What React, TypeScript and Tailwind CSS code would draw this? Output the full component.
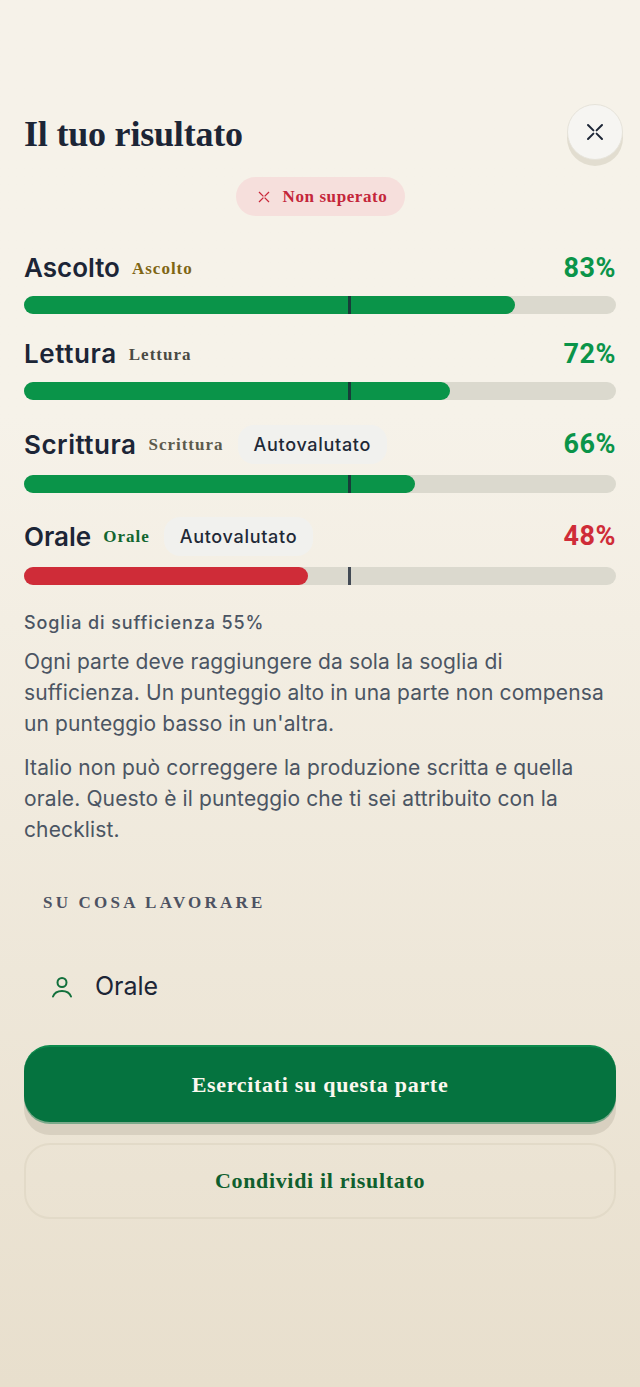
import React from "react";

const sans = "font-['Inter','Noto_Sans',sans-serif]";
const serif = "font-['Liberation_Serif',serif]";

function Row({ name, small, smallColor, pct, danger, val, badge, rowClass, nameTrack }: { name: string; small: string; smallColor: string; pct: string; danger?: boolean; val: number; badge?: boolean; rowClass: string; nameTrack: string }) {
  return (
    <div className={rowClass}>
      <div className={`flex items-center ${badge ? "h-[44px]" : "h-[40px]"}`}>
        <span className={`${sans} text-[26px] font-semibold text-[#1c2536] leading-none ${nameTrack}`}>{name}</span>
        <span className={`${serif} ml-[12px] text-[17px] font-bold tracking-[1px] leading-none ${smallColor}`}>{small}</span>
        {badge && (
          <span className={`${sans} ml-[14px] h-[39px] px-[16px] flex items-center rounded-[16px] bg-[#f1f1ee] text-[18px] font-medium tracking-[0.7px] text-[#1f2937]`}>Autovalutato</span>
        )}
        <span className={`font-['Roboto',sans-serif] ml-auto text-[27px] font-bold tracking-[0.5px] leading-none ${danger ? "text-[#cf2c38]" : "text-[#0a9449]"}`}>{pct}</span>
      </div>
      <div className="relative h-[18px] rounded-full bg-[#dbd9ce] mt-[8px]">
        <div className={`h-full rounded-full ${danger ? "bg-[#cf2c38]" : "bg-[#0a9449]"}`} style={{ width: `${val}%` }} />
        <div className="absolute left-[324px] top-0 h-full w-[3px] bg-[#1c2536]/80" />
      </div>
    </div>
  );
}

export default function App() {
  return (
    <div className={`${sans} w-[640px] h-[1387px] overflow-hidden bg-gradient-to-b from-[#f6f2e9] from-30% to-[#e8dfcd] px-[24px] pt-[104px]`}>
      <header className="flex items-start justify-between h-[73px]">
        <h1 className={`${serif} mt-[10px] text-[36px] font-bold leading-[40px] tracking-[-0.2px] text-[#1c2536]`}>Il tuo risultato</h1>
        <button className="-mr-[7px] w-[56px] h-[56px] rounded-full bg-[#f6f5f2] border border-[#e6e3da] shadow-[0_6px_0_#e2ddd0] flex items-center justify-center">
          <svg width="18" height="18" viewBox="0 0 18 18" fill="none" stroke="#1c2536" strokeWidth="2" strokeLinecap="round"><path d="M2 2 L7.4 7.4 M16 2 L10.6 7.4 M2 16 L7.4 10.6 M16 16 L10.6 10.6" /></svg>
        </button>
      </header>
      <div className="flex justify-center">
        <div className="h-[39px] w-[169px] pl-[5px] rounded-full bg-[#f6dfdc] flex items-center justify-center gap-[13px]">
          <svg width="12" height="12" viewBox="0 0 12 12" fill="none" stroke="#c9283a" strokeWidth="1.3"><path d="M1 1 L5.4 5.4 M11 1 L6.6 5.4 M1 11 L5.4 6.6 M11 11 L6.6 6.6" /></svg>
          <span className={`${serif} text-[17px] font-bold tracking-[0.6px] text-[#c4263a]`}>Non superato</span>
        </div>
      </div>
      <Row name="Ascolto" small="Ascolto" smallColor="text-[#7f6514]" pct="83%" val={83} rowClass="mt-[32px]" nameTrack="" />
      <Row name="Lettura" small="Lettura" smallColor="text-[#4a4a44]" pct="72%" val={72} rowClass="mt-[20px]" nameTrack="tracking-[0.6px]" />
      <Row name="Scrittura" small="Scrittura" smallColor="text-[#5c5a4c]" pct="66%" val={66} badge rowClass="mt-[22.5px]" nameTrack="tracking-[0.5px]" />
      <Row name="Orale" small="Orale" smallColor="text-[#12662f]" pct="48%" danger val={48} badge rowClass="mt-[22px]" nameTrack="" />
      <p className="mt-[26px] text-[18px] font-medium tracking-[0.9px] leading-[24px] text-[#4b5563]">Soglia di sufficienza 55%</p>
      <p className="mt-[11px] text-[21px] leading-[31px] tracking-[0.12px] text-[#4b5563]">Ogni parte deve raggiungere da sola la soglia di<br />sufficienza. Un punteggio alto in una parte non compensa<br />un punteggio basso in un'altra.</p>
      <p className="mt-[13px] text-[21px] leading-[31px] tracking-[0.12px] text-[#4b5563]">Italio non può correggere la produzione scritta e quella<br />orale. Questo è il punteggio che ti sei attribuito con la<br />checklist.</p>
      <div className={`${serif} mt-[46px] ml-[19px] text-[17px] font-bold tracking-[3.2px] leading-[24px] text-[#4d5262]`}>SU COSA LAVORARE</div>
      <div className="mt-[56px] ml-[25px] flex items-center gap-[20px] h-[32px]">
        <svg width="26" height="26" viewBox="0 0 26 26" fill="none" stroke="#12703c" strokeWidth="2" strokeLinecap="round"><circle cx="13" cy="8.5" r="4.5" /><path d="M4 22.5 C5.5 18.5 9 17 13 17 C17 17 20.5 18.5 22 22.5" /></svg>
        <span className="text-[25px] text-[#1c2536]">Orale</span>
      </div>
      <button className={`${serif} mt-[42px] block w-full h-[77px] rounded-[26px] bg-[#05733f] border-t-2 border-[#0c8a4c] shadow-[0_2px_0_#7aa98a,0_13px_0_#d8d0c0] text-[22px] font-bold tracking-[0.7px] text-[#fbf8ef]`}>Esercitati su questa parte</button>
      <button className={`${serif} mt-[21px] block w-full h-[76px] rounded-[26px] border-2 border-[#e2dac8] text-[22px] font-bold tracking-[0.66px] text-[#0f5f2e]`}>Condividi il risultato</button>
    </div>
  );
}
